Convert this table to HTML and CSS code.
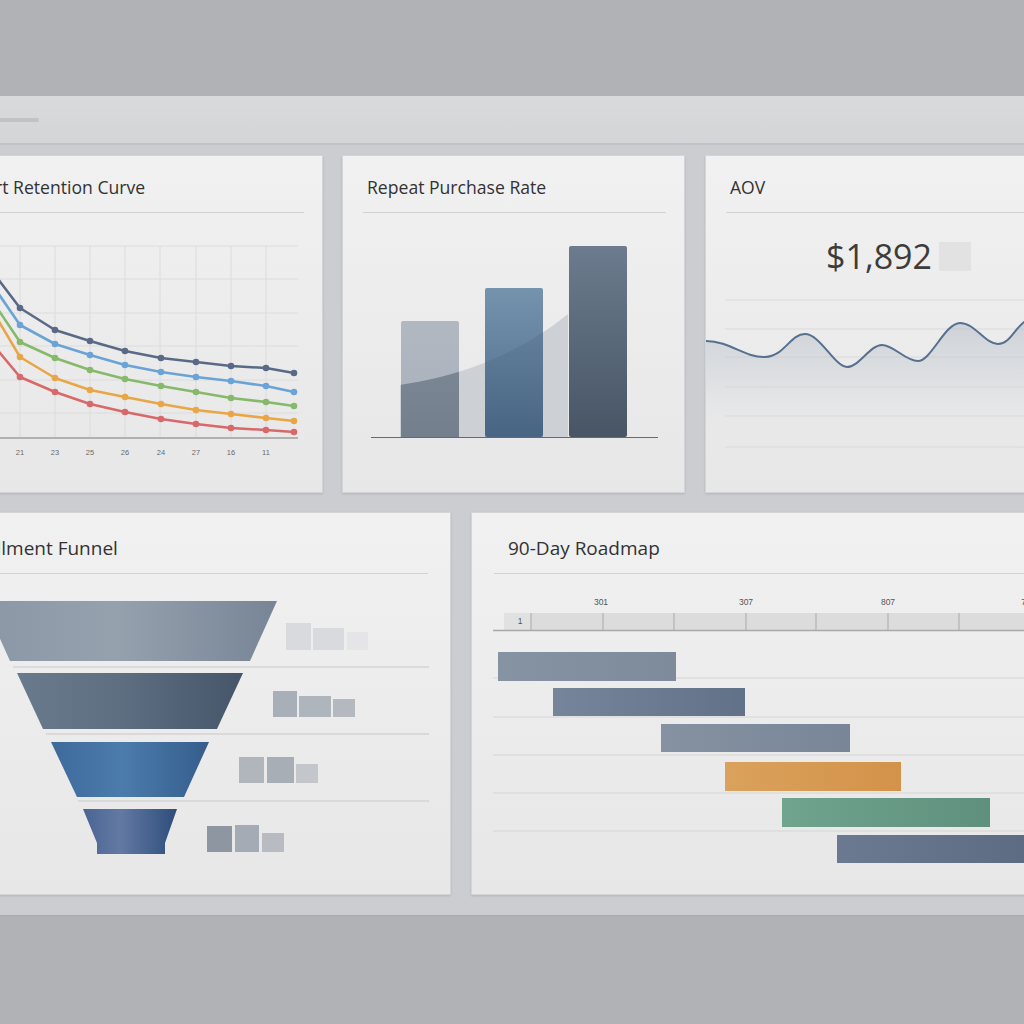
FILE: index.html
```html
<!DOCTYPE html>
<html lang="en">
<head>
<meta charset="utf-8">
<title>Dashboard</title>
<link rel="stylesheet" href="styles.css">
</head>
<body>
<div class="backdrop-top"></div>
<div class="panel">
  <div class="panel-header"><div class="header-tab"></div></div>
  <div class="panel-body">
    <div class="row row-top">
      <section class="card card-retention">
        <h2 class="card-title">Cohort Retention Curve</h2>
        <div class="rule"></div>
        <svg class="chart" width="387" height="279" viewBox="-65 213 387 279">
          <g fill="none" stroke="#dcdcdc" stroke-width="1">
            <path d="M-60 246H298M-60 279H298M-60 313H298M-60 346H298M-60 380H298M-60 413H298"/>
            <path d="M-15 246V438M20 246V438M55 246V438M90 246V438M125 246V438M160 246V438M196 246V438M231 246V438M266 246V438"/>
          </g>
          <path d="M-60 438H298" stroke="#9e9e9e" stroke-width="1.6"/>
          <g class="axis-labels" font-size="7.5" fill="#6a6a6a" text-anchor="middle">
            <text x="20" y="455">21</text><text x="55" y="455">23</text><text x="90" y="455">25</text><text x="125" y="455">26</text>
            <text x="161" y="455">24</text><text x="196" y="455">27</text><text x="231" y="455">16</text><text x="266" y="455">11</text>
          </g>
          <g fill="none" stroke-width="2.6" stroke-linejoin="round" stroke-linecap="round">
            <polyline stroke="#5a6a86" points="-50,215 -15,262 20,308 55,330 90,341 125,351 161,358 196,362 231,366 266,368 294,373"/>
            <polyline stroke="#6aa3d5" points="-50,228 -15,274 20,325 55,344 90,355 125,365 161,372 196,377 231,381 266,386 294,392"/>
            <polyline stroke="#86b96b" points="-50,245 -15,290 20,342 55,358 90,370 125,379 161,386 196,392 231,398 266,402 294,406"/>
            <polyline stroke="#e9a647" points="-50,250 -15,298 20,357 55,378 90,390 125,397 161,404 196,410 231,414 266,418 294,421"/>
            <polyline stroke="#d8686a" points="-50,290 -15,335 20,377 55,392 90,404 125,412 161,419 196,424 231,428 266,430 294,432"/>
          </g>
          <g fill="#5a6a86"><circle cx="20" cy="308" r="3.3"/><circle cx="55" cy="330" r="3.3"/><circle cx="90" cy="341" r="3.3"/><circle cx="125" cy="351" r="3.3"/><circle cx="161" cy="358" r="3.3"/><circle cx="196" cy="362" r="3.3"/><circle cx="231" cy="366" r="3.3"/><circle cx="266" cy="368" r="3.3"/><circle cx="294" cy="373" r="3.3"/></g>
          <g fill="#6aa3d5"><circle cx="20" cy="325" r="3.3"/><circle cx="55" cy="344" r="3.3"/><circle cx="90" cy="355" r="3.3"/><circle cx="125" cy="365" r="3.3"/><circle cx="161" cy="372" r="3.3"/><circle cx="196" cy="377" r="3.3"/><circle cx="231" cy="381" r="3.3"/><circle cx="266" cy="386" r="3.3"/><circle cx="294" cy="392" r="3.3"/></g>
          <g fill="#86b96b"><circle cx="20" cy="342" r="3.3"/><circle cx="55" cy="358" r="3.3"/><circle cx="90" cy="370" r="3.3"/><circle cx="125" cy="379" r="3.3"/><circle cx="161" cy="386" r="3.3"/><circle cx="196" cy="392" r="3.3"/><circle cx="231" cy="398" r="3.3"/><circle cx="266" cy="402" r="3.3"/><circle cx="294" cy="406" r="3.3"/></g>
          <g fill="#e9a647"><circle cx="20" cy="357" r="3.3"/><circle cx="55" cy="378" r="3.3"/><circle cx="90" cy="390" r="3.3"/><circle cx="125" cy="397" r="3.3"/><circle cx="161" cy="404" r="3.3"/><circle cx="196" cy="410" r="3.3"/><circle cx="231" cy="414" r="3.3"/><circle cx="266" cy="418" r="3.3"/><circle cx="294" cy="421" r="3.3"/></g>
          <g fill="#d8686a"><circle cx="20" cy="377" r="3.3"/><circle cx="55" cy="392" r="3.3"/><circle cx="90" cy="404" r="3.3"/><circle cx="125" cy="412" r="3.3"/><circle cx="161" cy="419" r="3.3"/><circle cx="196" cy="424" r="3.3"/><circle cx="231" cy="428" r="3.3"/><circle cx="266" cy="430" r="3.3"/><circle cx="294" cy="432" r="3.3"/></g>
        </svg>
      </section>

      <section class="card card-repeat">
        <h2 class="card-title">Repeat Purchase Rate</h2>
        <div class="rule"></div>
        <svg class="chart" width="341" height="279" viewBox="343 213 341 279">
          <defs>
            <linearGradient id="rb1" x1="0" y1="0" x2="0" y2="1"><stop offset="0" stop-color="#b1b8c2"/><stop offset="1" stop-color="#a8b0bb"/></linearGradient>
            <linearGradient id="rb1d" x1="0" y1="0" x2="0" y2="1"><stop offset="0" stop-color="#818c9a"/><stop offset="1" stop-color="#747f8d"/></linearGradient>
            <linearGradient id="rb2" x1="0" y1="0" x2="0" y2="1"><stop offset="0" stop-color="#7593ad"/><stop offset="1" stop-color="#4d6b8a"/></linearGradient>
            <linearGradient id="rb3" x1="0" y1="0" x2="0" y2="1"><stop offset="0" stop-color="#6c7b8d"/><stop offset="1" stop-color="#475565"/></linearGradient>
            <clipPath id="clip1"><rect x="401" y="321" width="58" height="116"/></clipPath>
            <clipPath id="clip2"><rect x="485" y="288" width="58" height="149"/></clipPath>
          </defs>
          <path d="M400 385 Q500 370 568 314 L568 437 L400 437 Z" fill="#cdd1d6"/>
          <rect x="401" y="321" width="58" height="116" rx="2" fill="url(#rb1)"/>
          <path d="M400 385 Q500 370 568 314 L568 437 L400 437 Z" fill="url(#rb1d)" clip-path="url(#clip1)"/>
          <rect x="485" y="288" width="58" height="149" rx="2" fill="url(#rb2)"/>
          <path d="M400 385 Q500 370 568 314 L568 437 L400 437 Z" fill="#1e3250" fill-opacity="0.1" clip-path="url(#clip2)"/>
          <rect x="569" y="246" width="58" height="191" rx="2" fill="url(#rb3)"/>
          <path d="M371 437.5H658" stroke="#666a70" stroke-width="1.2"/>
        </svg>
      </section>

      <section class="card card-aov">
        <h2 class="card-title">AOV</h2>
        <div class="rule"></div>
        <div class="kpi"><span class="kpi-value">$1,892</span><span class="kpi-chip"></span></div>
        <svg class="chart" width="398" height="216" viewBox="706 276 398 216">
          <defs>
            <linearGradient id="aovfill" x1="0" y1="0" x2="0" y2="1">
              <stop offset="0" stop-color="#a6b0be" stop-opacity="0.55"/>
              <stop offset="0.55" stop-color="#c3c9d1" stop-opacity="0.35"/>
              <stop offset="1" stop-color="#e6e7e9" stop-opacity="0"/>
            </linearGradient>
          </defs>
          <path d="M725 300H1104M725 329H1104M725 357H1104M725 387H1104M725 416H1104M725 447H1104" stroke="#dadada" stroke-width="1"/>
          <path d="M706 341 C730 341 745 358 765 357 S790 334 805 334 S835 367 847 367 S870 345 882 345 S905 361 918 361 S945 323 960 323 S985 344 998 344 S1015 325 1030 318 L1104 300 L1104 440 L706 440 Z" fill="url(#aovfill)"/>
          <path d="M706 341 C730 341 745 358 765 357 S790 334 805 334 S835 367 847 367 S870 345 882 345 S905 361 918 361 S945 323 960 323 S985 344 998 344 S1015 325 1030 318 L1104 300" fill="none" stroke="#56708f" stroke-width="2"/>
        </svg>
      </section>
    </div>

    <div class="row row-bottom">
      <section class="card card-funnel">
        <h2 class="card-title">Fulfillment Funnel</h2>
        <div class="rule"></div>
        <svg class="chart" width="515" height="320" viewBox="-65 574 515 320">
          <defs>
            <linearGradient id="f1" x1="0" y1="0" x2="1" y2="0"><stop offset="0" stop-color="#8a97a6"/><stop offset="0.45" stop-color="#96a1ae"/><stop offset="1" stop-color="#778596"/></linearGradient>
            <linearGradient id="f2" x1="0" y1="0" x2="1" y2="0"><stop offset="0" stop-color="#6a7a8d"/><stop offset="0.45" stop-color="#5f6f82"/><stop offset="1" stop-color="#45556a"/></linearGradient>
            <linearGradient id="f3" x1="0" y1="0" x2="1" y2="0"><stop offset="0" stop-color="#3e6a9a"/><stop offset="0.45" stop-color="#4b7cac"/><stop offset="1" stop-color="#355d8c"/></linearGradient>
            <linearGradient id="f4" x1="0" y1="0" x2="1" y2="0"><stop offset="0" stop-color="#4a6594"/><stop offset="0.4" stop-color="#6279a3"/><stop offset="1" stop-color="#2e4d7b"/></linearGradient>
          </defs>
          <path d="M13 667H429M46 734H429M78 801H429" stroke="#d4d4d4" stroke-width="1.4"/>
          <polygon points="-17,601 277,601 250,661 10,661" fill="url(#f1)"/>
          <polygon points="17,673 243,673 217,729 43,729" fill="url(#f2)"/>
          <polygon points="51,742 209,742 184,797 77,797" fill="url(#f3)"/>
          <path d="M83 809H177L165 843V854H97V843Z" fill="url(#f4)"/>
          <rect x="286" y="623" width="25" height="27" fill="#d9dadd"/>
          <rect x="313" y="628" width="31" height="22" fill="#d9dadd"/>
          <rect x="347" y="632" width="21" height="18" fill="#e5e5e7"/>
          <rect x="273" y="691" width="24" height="26" fill="#a9afb8"/>
          <rect x="299" y="696" width="32" height="21" fill="#afb5bd"/>
          <rect x="333" y="699" width="22" height="18" fill="#b4b9c0"/>
          <rect x="239" y="757" width="25" height="26" fill="#b1b6bd"/>
          <rect x="267" y="757" width="27" height="26" fill="#a8aeb6"/>
          <rect x="296" y="764" width="22" height="19" fill="#c3c6cb"/>
          <rect x="207" y="826" width="25" height="26" fill="#8d96a1"/>
          <rect x="235" y="825" width="24" height="27" fill="#a4abb4"/>
          <rect x="262" y="833" width="22" height="19" fill="#b8bcc2"/>
        </svg>
      </section>

      <section class="card card-roadmap">
        <h2 class="card-title">90-Day Roadmap</h2>
        <div class="rule"></div>
        <svg class="chart" width="598" height="320" viewBox="472 574 598 320">
          <defs>
            <linearGradient id="g1" x1="0" y1="0" x2="1" y2="0"><stop offset="0" stop-color="#8693a2"/><stop offset="1" stop-color="#7e8b9b"/></linearGradient>
            <linearGradient id="g2" x1="0" y1="0" x2="1" y2="0"><stop offset="0" stop-color="#77859a"/><stop offset="1" stop-color="#617187"/></linearGradient>
            <linearGradient id="g3" x1="0" y1="0" x2="1" y2="0"><stop offset="0" stop-color="#8692a1"/><stop offset="1" stop-color="#788698"/></linearGradient>
            <linearGradient id="g4" x1="0" y1="0" x2="1" y2="0"><stop offset="0" stop-color="#daa25c"/><stop offset="1" stop-color="#d4924a"/></linearGradient>
            <linearGradient id="g5" x1="0" y1="0" x2="1" y2="0"><stop offset="0" stop-color="#70a48d"/><stop offset="1" stop-color="#5f907e"/></linearGradient>
            <linearGradient id="g6" x1="0" y1="0" x2="1" y2="0"><stop offset="0" stop-color="#6c7a91"/><stop offset="1" stop-color="#5d6b82"/></linearGradient>
          </defs>
          <g font-size="8.5" fill="#555" text-anchor="middle">
            <text x="601" y="605">301</text><text x="746" y="605">307</text><text x="888" y="605">807</text><text x="1026" y="605">78</text>
          </g>
          <rect x="504" y="613" width="566" height="17" fill="#dcdcdc"/>
          <rect x="504" y="613" width="27" height="17" fill="#e1e1e1"/>
          <path d="M531 613V630M603 613V630M674 613V630M746 613V630M816 613V630M888 613V630M959 613V630M1030 613V630" stroke="#b2b2b2" stroke-width="1.2"/>
          <text x="520" y="624" font-size="8.5" fill="#555" text-anchor="middle">1</text>
          <path d="M493 630.5H1070" stroke="#a9a9a9" stroke-width="1.6"/>
          <path d="M493 678H1070M493 717H1070M493 755H1070M493 793H1070M493 831H1070" stroke="#d6d6d6" stroke-width="1.2"/>
          <rect x="498" y="652" width="178" height="29" fill="url(#g1)"/>
          <rect x="553" y="688" width="192" height="28" fill="url(#g2)"/>
          <rect x="661" y="724" width="189" height="28" fill="url(#g3)"/>
          <rect x="725" y="762" width="176" height="29" fill="url(#g4)"/>
          <rect x="782" y="798" width="208" height="29" fill="url(#g5)"/>
          <rect x="837" y="835" width="200" height="28" fill="url(#g6)"/>
        </svg>
      </section>
    </div>
  </div>
</div>
</body>
</html>
```

FILE: styles.css
```css
html, body {
  margin: 0;
  padding: 0;
}

body {
  width: 1024px;
  height: 1024px;
  overflow: hidden;
  background: #b1b2b6;
  font-family: "Open Sans", "Liberation Sans", sans-serif;
}

.backdrop-top {
  height: 96px;
}

.panel {
  margin-left: -90px;
  width: 1250px;
  background: #cbcdd1;
}

.panel-header {
  height: 47px;
  background: linear-gradient(#d9dadc, #d4d5d7);
  border-bottom: 2px solid #c1c2c5;
  display: flex;
  align-items: flex-start;
}

.header-tab {
  margin: 22px 0 0 50px;
  width: 79px;
  height: 4px;
  border-radius: 2px;
  background: #c1c2c5;
}

.panel-body {
  padding: 10px 0 20px 24px;
  display: flex;
  flex-direction: column;
  gap: 19px;
  border-bottom: 1px solid #a8a9ad;
}

.row {
  display: flex;
  gap: 20px;
}

.row-top {
  height: 338px;
  gap: 19px;
}

.row-bottom {
  height: 383px;
}

.card {
  box-sizing: border-box;
  flex: none;
  display: flex;
  flex-direction: column;
  overflow: hidden;
  background: linear-gradient(#f1f1f1, #e7e7e7);
  border: 1px solid #d4d5d7;
  box-shadow: 0 1px 2px rgba(0, 0, 0, 0.12);
}

.card-retention { width: 389px; }
.card-repeat { width: 343px; }
.card-aov { width: 400px; margin-left: 1px; }
.card-funnel { width: 517px; }
.card-roadmap { width: 600px; }

.card-title {
  margin: 0;
  padding: 19px 0 0 24px;
  font-size: 17.6px;
  line-height: 24px;
  font-weight: 500;
  color: #333;
  white-space: nowrap;
}

.card-retention .card-title {
  padding-left: 17px;
}

.rule {
  margin: 13px 18px 0 20px;
  border-top: 1px solid #d2d2d2;
}

.row-bottom .card-title {
  padding-top: 22px;
  font-size: 19px;
  line-height: 26px;
}

.row-bottom .rule {
  margin: 12px 22px 0 22px;
}

.card-roadmap .card-title {
  padding-left: 36px;
}

.chart {
  display: block;
  flex: none;
  font-family: "Liberation Sans", Arial, sans-serif;
}

.kpi {
  display: flex;
  align-items: center;
  gap: 7px;
  height: 40px;
  margin-top: 23px;
  padding-left: 120px;
}

.kpi-value {
  font-size: 34px;
  line-height: 40px;
  color: #3c3c3c;
}

.kpi-chip {
  width: 32px;
  height: 29px;
  background: #e2e2e2;
}
```
